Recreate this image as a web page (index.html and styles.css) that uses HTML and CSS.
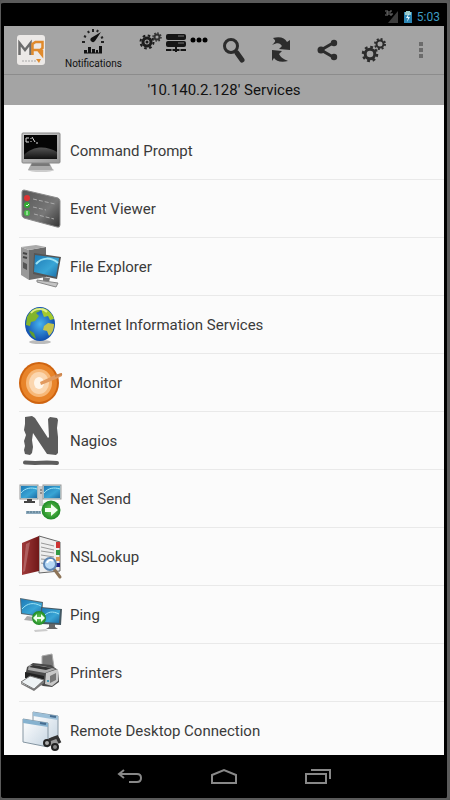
FILE: index.html
```html
<!DOCTYPE html>
<html lang="en">
<head>
    <meta charset="UTF-8">
    <meta name="viewport" content="width=device-width, initial-scale=1.0">
    <title>Services</title>
    <link rel="stylesheet" href="styles.css">
</head>
<body>

<div class="phone">
    <div class="status">
        <svg width="15" height="14" viewBox="0 0 15 14"><path d="M14 1v12H4z" fill="#3c3c3c"/><path d="M1 1h3v4H1M2 3h2M8 1H6v4h2V3" fill="none" stroke="#777"/></svg>
        <svg width="8" height="14" viewBox="0 0 8 14"><path d="M2 1h4v1h2v11H0V2h2z" fill="#2b85b4"/><path d="M2 1h4v1h1v3H1V2h1z" fill="#9cc"/><path d="M5 3L2 8h2l-1 4 3-5H4z" fill="#e5f8ff"/></svg>
        <span>5:03</span>
    </div>

    <header class="toolbar">
        <button class="logo" aria-label="Home">
            <svg width="28" height="32" viewBox="0 0 28 32">
                <rect x="0" y="1" width="28" height="30" rx="3" fill="#ece9e7"/>
                <path d="M2.500 21V9L8 16l5.500-7v12" fill="none" stroke="#6d6d6d" stroke-width="2.500"/>
                <path d="M15.500 21V10l3-2h7v6l-2 2h-7M21 16l4 5v-5" fill="none" stroke="#e08a2c" stroke-width="2.500"/>
                <path d="M5 27h14" stroke="#a8a8a8" stroke-dasharray="2 1"/><path d="M19 25h5l-2 4z" fill="#e08a2c"/>
            </svg>
        </button>
        <button class="notif">
            <svg width="24" height="26" viewBox="0 0 24 26">
                <path d="M1 14h3M3 8l2 1M7 3l1 2M12 1v3M17 2l-1 2M20 14h3M20 10l2-1" stroke="#222" stroke-width="2" fill="none"/>
                <path d="M20 4l-6 9a2.500 2.500 0 0 1-4-3z" fill="#111"/>
                <path d="M3 25v-3h3v3zM7 25v-6h3v6zM11 25v-4h3v4zM15 25v-3h2v3zM18 25v-7h3v7z" fill="#111"/>
                <path d="M3 25h18" stroke="#111"/>
            </svg>
            <span>Notifications</span>
        </button>
        <button class="tools" aria-label="Tools">
            <svg width="69" height="22" viewBox="0 0 69 22">
                <circle cx="8" cy="11" r="4" fill="none" stroke="#1c1c1c" stroke-width="3"/>
                <circle cx="8" cy="11" r="6.500" fill="none" stroke="#1c1c1c" stroke-width="2" stroke-dasharray="2.600 2.500"/>
                <circle cx="8" cy="11" r="1.500" fill="#1c1c1c"/>
                <circle cx="18" cy="6" r="2.500" fill="none" stroke="#333" stroke-width="2"/>
                <circle cx="18" cy="6" r="4" fill="none" stroke="#333" stroke-width="1.500" stroke-dasharray="1.600 1.500"/>
                <rect x="27" y="3" width="20" height="6" rx="2" fill="#151515"/>
                <rect x="27" y="10" width="20" height="6" rx="2" fill="#151515"/>
                <path d="M39 5h6M39 12h6" stroke="#777"/>
                <path d="M37 15v6M27 19h20" stroke="#151515" stroke-width="2"/>
                <path d="M33 18v2M41 18v2" stroke="#a4a4a4"/>
                <circle cx="54" cy="9" r="2.500"/><circle cx="60" cy="9" r="2.500"/><circle cx="66" cy="9" r="2.500"/>
            </svg>
        </button>
        <div class="actions">
            <button aria-label="Search">
                <svg width="26" height="26" viewBox="0 0 26 26" fill="none" stroke="#2c2c2c"><circle cx="11" cy="9" r="6.500" stroke-width="3"/><path d="M15 14l2 2" stroke-width="3"/><path d="M17 16l5 7" stroke-width="5" stroke-linecap="round"/></svg>
            </button>
            <button aria-label="Refresh">
                <svg width="26" height="26" viewBox="0 0 26 26" fill="#2c2c2c"><path d="M6 1c7-2 12 0 14 4l3-2v10l-11-1 3-3C13 6 11 5 5 8c4-4 4-4 1-7z"/><path d="M21 24c-7 2-12 0-14-3l-2 3V13l10 1-3 3c2 4 5 5 9 7z"/></svg>
            </button>
            <button aria-label="Share">
                <svg width="26" height="26" viewBox="0 0 26 26" fill="#2c2c2c"><path d="M19 6L7 13l12 7" fill="none" stroke="#2c2c2c" stroke-width="3"/><circle cx="7" cy="13" r="3.500"/><circle cx="20" cy="6" r="3.200"/><circle cx="20" cy="20" r="3.200"/></svg>
            </button>
            <button aria-label="Settings">
                <svg width="26" height="26" viewBox="0 0 26 26" fill="none" stroke="#2c2c2c"><circle cx="9" cy="17" r="4.800" stroke-width="3"/><circle cx="9" cy="17" r="7" stroke-width="2.500" stroke-dasharray="2.800 2.700"/><circle cx="19" cy="7" r="3.500" stroke-width="2"/><circle cx="19" cy="7" r="5" stroke-width="2" stroke-dasharray="2 1.930"/></svg>
            </button>
            <button aria-label="More">
                <svg width="26" height="26" viewBox="0 0 26 26" fill="#6b6b6b"><path d="M11 5h4v4h-4zM11 11h4v4h-4zM11 17h4v4h-4z"/></svg>
            </button>
        </div>
    </header>

    <h1 class="title">'10.140.2.128' Services</h1>

    <main class="list">
        <a href="#">
            <svg width="44" height="50" viewBox="0 0 44 50">
                <ellipse cx="22" cy="44" rx="13" ry="2" fill="#ccc"/>
                <path d="M13 36h17l4 8H9z" fill="#aaa"/><path d="M13 37h17l1 3H12z" fill="#777"/>
                <rect x="3" y="7" width="38" height="30" rx="1" fill="url(#silver)" stroke="#888"/>
                <rect x="5" y="9" width="33" height="24" fill="#050505"/>
                <path d="M5 29c8-9 22-10 33-3v7H5z" fill="url(#glow)"/>
                <path d="M10 12H7v4h3M12 12v1M12 15v1M13 11l3 5M17 17h2" fill="none" stroke="#ddd"/>
            </svg>
            <span>Command Prompt</span>
        </a>
        <a href="#">
            <svg width="44" height="50" viewBox="0 0 44 50">
                <path d="M5 6l34 8q2 1 2 3v24q0 3-3 2L5 34q-2-1-2-3V8q0-2 2-2z" fill="url(#slate)" stroke="#8b8b8b"/>
                <path d="M14 15l22 5M14 23l13 3M15 30l20 5" stroke="#aaa" stroke-dasharray="4 2"/>
                <circle cx="8" cy="14" r="3" fill="#d33"/><circle cx="8" cy="21" r="3" fill="#3a3"/><circle cx="8" cy="29" r="3" fill="#4b4"/>
                <path d="M7 21l1 1 2-2M8 27v4" stroke="#dfd" fill="none"/>
            </svg>
            <span>Event Viewer</span>
        </a>
        <a href="#">
            <svg width="44" height="50" viewBox="0 0 44 50">
                <path d="M2 5l8 3v30l-8-5z" fill="#999"/><path d="M10 8l17-3v30l-17 3z" fill="#6b6b6b"/><path d="M2 5l15-2 10 2-17 3z" fill="#aaa"/>
                <path d="M4 11l4 1M4 15l4 1" stroke="#444" stroke-width="2"/><path d="M4 20l4 2v6l-4-2z" fill="#555"/>
                <path d="M15 11l27 4-4 22-24-5z" fill="#555"/><path d="M16 13l24 3-3 19-22-5z" fill="url(#screen)"/>
                <path d="M17 22c6-7 15-7 22-1" stroke="#9de3f5" stroke-width="2" fill="none"/>
                <path d="M24 35l7 1-1 4h-6z" fill="#777"/><path d="M18 38l21 3-2 4-19-5z" fill="#c4c4c4" stroke="#888"/>
            </svg>
            <span>File Explorer</span>
        </a>
        <a href="#">
            <svg width="44" height="50" viewBox="0 0 44 50">
                <ellipse cx="21" cy="42" rx="11" ry="2" fill="#bbb"/>
                <ellipse cx="21" cy="24" rx="15" ry="17" fill="url(#ocean)"/>
                <path d="M8 17c3-6 7-9 12-9l1 3-4 2 3 3-4 5-4 1-1 4-4-1z" fill="#82b52b"/>
                <path d="M23 8c6 1 10 5 12 11l-4 1-2-4-4 1-2-5z" fill="#a3c92c"/>
                <path d="M25 26l4-3 6 1c0 6-2 9-5 12l-2-5-4-1z" fill="#c3c34c"/>
                <path d="M10 30l5 3 2 6c-4-2-6-5-7-9z" fill="#5f9d32"/>
                <path d="M12 13c4-5 12-5 16-1" stroke="#dfef8a" fill="none" stroke-width="2"/>
            </svg>
            <span>Internet Information Services</span>
        </a>
        <a href="#">
            <svg width="44" height="50" viewBox="0 0 44 50">
                <ellipse cx="20" cy="25" rx="20" ry="21" fill="#cf6410"/><ellipse cx="20" cy="25" rx="18" ry="19" fill="#e8842a"/>
                <ellipse cx="20" cy="25" rx="13" ry="14" fill="#f7b878"/><ellipse cx="20" cy="25" rx="10" ry="11" fill="#fbd6ae"/><ellipse cx="20" cy="25" rx="5" ry="6" fill="#fff6ea"/>
                <path d="M21 24l15-7 7-2v3l-6 3-15 6z" fill="#e29a5e"/><path d="M36 18l7-2" stroke="#c98550" stroke-width="2"/>
            </svg>
            <span>Monitor</span>
        </a>
        <a href="#">
            <svg width="44" height="50" viewBox="0 0 44 50">
                <path d="M6 1l7-1 3 2 13 20 1-1-1-18 2-2 7 1 1 2-1 8 1 9v16l-2 2-9-1-14-21-1 7 1 7-1 6-2 2-5-1-1-4 1-4-1-5 2-6-2-5 1-6z" fill="#5c5c5c"/>
                <path d="M6 46.500l10 .5 12-.5 10 .5" stroke="#5c5c5c" stroke-width="4" stroke-linecap="round" fill="none"/>
            </svg>
            <span>Nagios</span>
        </a>
        <a href="#">
            <svg width="44" height="50" viewBox="0 0 44 50">
                <path d="M20 12h4v20h-4z" fill="#ccc"/><path d="M21 16h2M21 19h2" stroke="#555"/>
                <rect x="1" y="11" width="18" height="14" fill="#bcdbe4" stroke="#999"/><rect x="2" y="12" width="16" height="12" fill="url(#screen)"/>
                <rect x="24" y="11" width="18" height="14" fill="#bcdbe4" stroke="#999"/><rect x="25" y="12" width="16" height="12" fill="url(#screen)"/>
                <path d="M2 19c4-5 10-6 16-4M25 19c4-5 10-6 16-4" stroke="#a3e8f8" fill="none"/>
                <path d="M8 25h5v2h3v2H5v-2h3z" fill="#444"/>
                <path d="M7 37h15v3H7z" fill="#8daabd"/><path d="M8 38h13" stroke="#4f7184" stroke-dasharray="2 1"/>
                <circle cx="32" cy="36" r="9.500" fill="url(#green)"/><path d="M26 34h6v-4l7 6-7 6v-4h-6z" fill="#f2fff0"/>
            </svg>
            <span>Net Send</span>
        </a>
        <a href="#">
            <svg width="44" height="50" viewBox="0 0 44 50">
                <path d="M20 4l21 6v29l-21 2z" fill="#eee" stroke="#666"/>
                <path d="M22 11l13 3M22 15l13 3M22 19l13 2M22 23l13 2M22 27l11 1M22 31l6 1" stroke="#999"/>
                <path d="M37 10h4v6h-4z" fill="#c33"/><path d="M37 18h4v5h-4z" fill="#394"/><path d="M37 25h4v4h-4z" fill="#d95"/><path d="M37 31h4v4h-4z" fill="#228"/>
                <path d="M3 11L20 4v35L3 43z" fill="url(#book)"/><path d="M7 12l4-2-5 29-2 1z" fill="#c98b8b" opacity=".5"/>
                <path d="M35 37l6 8" stroke="#8d7458" stroke-width="3" stroke-linecap="round"/>
                <circle cx="31" cy="32" r="6" fill="#b8d9f5" stroke="#5d86b4" stroke-width="2"/><path d="M28 31c1-3 4-4 6-2" stroke="#fff" stroke-width="2" fill="none"/>
            </svg>
            <span>NSLookup</span>
        </a>
        <a href="#">
            <svg width="44" height="50" viewBox="0 0 44 50">
                <path d="M1 8l23 4-1 15-21-3z" fill="#556a75"/><path d="M2 9l21 4-1 13-19-3z" fill="url(#screen)"/><path d="M3 19c5-6 12-7 19-3" stroke="#9de3f5" fill="none"/>
                <path d="M8 26l7 1-2 4-8-1z" fill="#aaa"/>
                <path d="M22 17l21 2-1 16-19-1z" fill="#445863"/><path d="M23 18l18 2-1 13-16-1z" fill="url(#screen)"/><path d="M24 27c5-6 10-6 16-3" stroke="#9de3f5" fill="none"/>
                <path d="M30 34h6v3l3 2H27l3-2z" fill="#666"/><path d="M15 40l12-1 2 2-13 1z" fill="#ccc"/>
                <circle cx="20" cy="28" r="7" fill="url(#green)"/><path d="M14 28l4-4v3h4v-3l4 4-4 4v-3h-4v3z" fill="#efe"/>
            </svg>
            <span>Ping</span>
        </a>
        <a href="#">
            <svg width="44" height="50" viewBox="0 0 44 50">
                <path d="M23 8l10-2 2 13-12-1z" fill="#777" stroke="#aaa"/>
                <path d="M8 19l6-4 18 2 7 5 1 12-7 5-9-1-18-9z" fill="#4a4a4a"/>
                <path d="M10 17l14 1 13 3-11 4-17-3z" fill="#aaa"/><path d="M14 17l19 3-6 2-17-3z" fill="#333"/>
                <path d="M27 25l12-4v12l-6 5-7-2z" fill="#c8c8c8"/><path d="M31 28l6-3v7l-6 3z" fill="#777"/><circle cx="29" cy="33" r="1" fill="#28a"/>
                <path d="M6 24l19 4v5L6 30z" fill="#222"/>
                <path d="M2 34l9-6 14 4-10 9z" fill="#edf2f4" stroke="#777"/><path d="M2 35l13 6 10-9v3l-10 8-13-7z" fill="#777"/>
            </svg>
            <span>Printers</span>
        </a>
        <a href="#">
            <svg width="44" height="50" viewBox="0 0 44 50">
                <path d="M14 6l25 4v27l-25-4z" fill="url(#pane)" stroke="#8495a1"/><path d="M14 6l25 4v4l-25-4z" fill="#9bbfd8"/><path d="M31 10l6 1" stroke="#456c90" stroke-width="2"/>
                <path d="M4 13l25 4v24L4 36z" fill="url(#pane)" stroke="#8495a1"/><path d="M4 13l25 4v4L4 17z" fill="#86b2cf"/><path d="M21 17l6 1" stroke="#456c90" stroke-width="2"/>
                <path d="M26 36l7-5 5-1 3 3-1 4-6 5" fill="#999"/>
                <circle cx="28" cy="37" r="3" fill="#aaa" stroke="#222" stroke-width="2"/><circle cx="36" cy="41" r="3" fill="#888" stroke="#222" stroke-width="2"/><path d="M30 34l8-3 3 6" fill="none" stroke="#333" stroke-width="3"/>
            </svg>
            <span>Remote Desktop Connection</span>
        </a>
    </main>

    <nav class="navbar">
        <button aria-label="Back"><svg width="26" height="18" viewBox="0 0 26 18"><path d="M7 2L2 6l5 4M2 6h18q4 0 4 4t-4 4H12" fill="none" stroke="#888" stroke-width="2"/></svg></button>
        <button aria-label="Home screen"><svg width="26" height="18" viewBox="0 0 26 18"><path d="M1 15V7l12-5 12 5v8z" fill="none" stroke="#888" stroke-width="2"/></svg></button>
        <button aria-label="Recent apps"><svg width="26" height="18" viewBox="0 0 26 18"><path d="M1 6h20v9H1zM6 2h19v9" fill="none" stroke="#888" stroke-width="2"/></svg></button>
    </nav>
</div>

<!-- shared gradients -->
<svg class="defs" width="0" height="0">
    <linearGradient id="silver" x2="1" y2="1"><stop stop-color="#ccc"/><stop offset="1" stop-color="#999"/></linearGradient>
    <linearGradient id="glow" x2="0" y2="1"><stop stop-color="#555"/><stop offset="1" stop-color="#111"/></linearGradient>
    <linearGradient id="slate" x2="1" y2="1"><stop stop-color="#555"/><stop offset=".6" stop-color="#777"/><stop offset="1" stop-color="#333"/></linearGradient>
    <linearGradient id="screen" x2="1" y2="1"><stop stop-color="#1d79b5"/><stop offset=".6" stop-color="#39a5d5"/><stop offset="1" stop-color="#1c6ca5"/></linearGradient>
    <linearGradient id="book" x2="1" y2="0"><stop stop-color="#a03a3a"/><stop offset="1" stop-color="#701818"/></linearGradient>
    <linearGradient id="pane" x2="1" y2="1"><stop stop-color="#fff"/><stop offset="1" stop-color="#c6d5e2"/></linearGradient>
    <radialGradient id="ocean"><stop stop-color="#46b3ee"/><stop offset="1" stop-color="#124fae"/></radialGradient>
    <radialGradient id="green"><stop stop-color="#6fcf5a"/><stop offset="1" stop-color="#1e8a25"/></radialGradient>
</svg>

</body>
</html>
```
FILE: styles.css
```css
* {
    box-sizing: border-box;
}
body {
    margin: 0;
    font-family: Roboto, "Liberation Sans", sans-serif;
    background: #555;
}
button {
    display: flex;
    align-items: center;
    justify-content: center;
    padding: 0;
    border: none;
    background: none;
    color: #111;
    font-family: inherit;
    cursor: pointer;
}
svg {
    display: block;
    flex: none;
}
.defs {
    position: absolute;
}
.phone {
    display: flex;
    flex-direction: column;
    height: 100vh;
    border: solid #5a5a5a;
    border-width: 3px 3px 2px 1px;
    padding: 0 3px;
    border-radius: 4px;
    background: #000;
}
.status {
    display: flex;
    flex: none;
    align-items: center;
    justify-content: flex-end;
    gap: 5px;
    height: 23px;
    padding: 4px 4px 0 0;
    font-size: 12px;
    color: #3e9cc4;
}
.toolbar {
    display: flex;
    flex: none;
    height: 49px;
    padding-left: 13px;
    background: #a4a4a4;
    border-bottom: 1px solid #8c8c8c;
}
.notif {
    flex-direction: column;
    justify-content: flex-start;
    gap: 4px;
    margin: 2px 17px 0 20px;
    font-size: 10px;
    line-height: 12px;
}
.tools {
    align-items: flex-start;
    padding-top: 5px;
}
.actions {
    display: flex;
    margin-left: auto;
}
.actions button {
    width: 47px;
}
.title {
    flex: none;
    margin: 0;
    font-size: 15px;
    font-weight: 400;
    line-height: 30px;
    text-align: center;
    color: #111;
    background: #a4a4a4;
}
.list {
    flex: 1;
    min-height: 0;
    padding: 17px 0 0 15px;
    overflow-y: auto;
    scrollbar-width: none;
    background: #fbfbfb;
}
.list a {
    display: flex;
    align-items: center;
    gap: 7px;
    height: 58px;
    border-bottom: 1px solid #e9e9e9;
    font-size: 15px;
    color: #3a3a3a;
    text-decoration: none;
}
.navbar {
    display: flex;
    flex: none;
    justify-content: center;
    gap: 68px;
    height: 43px;
}
```
